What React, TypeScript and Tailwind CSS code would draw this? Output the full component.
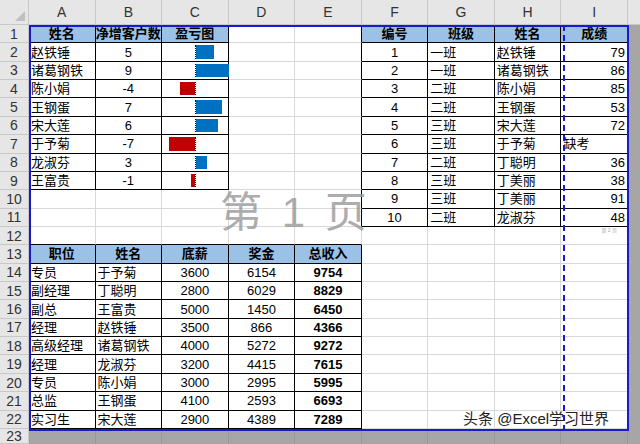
import React from 'react';

const COLS = ['A', 'B', 'C', 'D', 'E', 'F', 'G', 'H', 'I'];
type Cell = { v?: string | number; align?: 'l' | 'c' | 'r'; bold?: boolean; head?: boolean };
const grid: Record<string, Cell> = {};
const put = (r: number, c: number, v: string | number, align: 'l' | 'c' | 'r' = 'c', bold = false, head = false) => {
  grid[`${r}-${c}`] = { v, align, bold, head };
};

// table 1: A1:C9
const t1 = [['赵铁锤', 5], ['诸葛钢铁', 9], ['陈小娟', -4], ['王钢蛋', 7], ['宋大莲', 6], ['于予菊', -7], ['龙淑芬', 3], ['王富贵', -1]] as const;
['姓名', '净增客户数', '盈亏图'].forEach((h, i) => put(1, i, h, 'c', true, true));
t1.forEach(([n, v], i) => { put(i + 2, 0, n, 'l'); put(i + 2, 1, v); put(i + 2, 2, ''); });

// table 2: F1:I11
const t2 = [
  [1, '一班', '赵铁锤', 79], [2, '一班', '诸葛钢铁', 86], [3, '二班', '陈小娟', 85], [4, '二班', '王钢蛋', 53],
  [5, '三班', '宋大莲', 72], [6, '三班', '于予菊', '缺考'], [7, '二班', '丁聪明', 36], [8, '三班', '丁美丽', 38],
  [9, '三班', '丁美丽', 91], [10, '二班', '龙淑芬', 48],
] as const;
['编号', '班级', '姓名', '成绩'].forEach((h, i) => put(1, i + 5, h, 'c', true, true));
t2.forEach(([a, b, c, d], i) => {
  put(i + 2, 5, a); put(i + 2, 6, b, 'l'); put(i + 2, 7, c, 'l'); put(i + 2, 8, d, typeof d === 'number' ? 'r' : 'l');
});

// table 3: A13:E22
const t3 = [
  ['专员', '于予菊', 3600, 6154], ['副经理', '丁聪明', 2800, 6029], ['副总', '王富贵', 5000, 1450], ['经理', '赵铁锤', 3500, 866],
  ['高级经理', '诸葛钢铁', 4000, 5272], ['经理', '龙淑芬', 3200, 4415], ['专员', '陈小娟', 3000, 2995], ['总监', '王钢蛋', 4100, 2593],
  ['实习生', '宋大莲', 2900, 4389],
] as const;
['职位', '姓名', '底薪', '奖金', '总收入'].forEach((h, i) => put(13, i, h, 'c', true, true));
t3.forEach(([a, b, c, d], i) => {
  put(i + 14, 0, a, 'l'); put(i + 14, 1, b, 'l'); put(i + 14, 2, c); put(i + 14, 3, d); put(i + 14, 4, c + d, 'c', true);
});

const inTable = (r: number, c: number) => !!grid[`${r}-${c}`];
const bars: Record<number, number> = Object.fromEntries(t1.map(([, v], i) => [i + 2, v]));

function DataBar({ v }: { v: number }) {
  const w = Math.abs(v) * 3.67;
  return (
    <div className="absolute inset-0">
      <div className="absolute top-[2px] bottom-[2px] left-[33px] border-l border-dotted border-black" />
      <div
        className={v > 0 ? 'absolute top-[2px] bottom-[2px] bg-[#0070c0]' : 'absolute top-[2px] bottom-[2px] bg-[#c00000]'}
        style={v > 0 ? { left: 34, width: w } : { left: 33 - w, width: w }}
      />
    </div>
  );
}

export default function App() {
  const rows = Array.from({ length: 23 }, (_, i) => i + 1);
  return (
    <div className="w-[640px] h-[444px] overflow-hidden bg-[#a6a6a6] relative text-[13px] text-black" style={{ fontFamily: '"Liberation Sans", "Noto Sans CJK SC", sans-serif' }}>
      <div className="grid grid-cols-[29px_repeat(9,66.55px)_1fr] grid-rows-[25px_repeat(22,18.36px)_1fr] h-full">
        {/* column headers */}
        <div className="bg-[#e6e6e6] border-r border-b border-[#c8c8c8] relative">
          <div className="absolute right-[3px] bottom-[3px] w-0 h-0 border-l-[10px] border-l-transparent border-b-[10px] border-b-[#c0c0c0]" />
        </div>
        {COLS.map((c) => (
          <div key={c} className="bg-[#e6e6e6] border-r border-b border-[#c8c8c8] flex items-center justify-center text-[14px] text-[#333]">{c}</div>
        ))}
        <div className="bg-[#e6e6e6] border-b border-[#c8c8c8]" />
        {rows.map((r) => (
          <React.Fragment key={r}>
            <div className="bg-[#e6e6e6] border-r border-b border-[#c8c8c8] flex items-center justify-center text-[14px] text-[#333] leading-none">{r}</div>
            {COLS.map((_, c) => {
              if (r === 23) return <div key={c} className="bg-[#a6a6a6] border-r border-[#999]" />;
              const cell = grid[`${r}-${c}`];
              const rb = inTable(r, c) || inTable(r, c + 1) ? 'border-r-black' : 'border-r-[#d9d9d9]';
              const bb = inTable(r, c) || inTable(r + 1, c) ? 'border-b-black' : 'border-b-[#d9d9d9]';
              const bg = cell?.head ? 'bg-[#9bc2e6]' : 'bg-white';
              const al = cell?.align === 'l' ? 'justify-start pl-[2px]' : cell?.align === 'r' ? 'justify-end pr-[2px]' : 'justify-center';
              return (
                <div key={c} className={`relative flex items-center leading-none border-r border-b ${rb} ${bb} ${bg} ${al} ${cell?.bold ? 'font-bold' : ''}`}>
                  {c === 2 && bars[r] !== undefined && <DataBar v={bars[r]} />}
                  {!(c === 2 && r > 1 && r < 10) && cell?.v}
                  {r === 12 && c === 8 && <span className="absolute top-[1px] left-[40px] text-[5px] text-[#aaa]">第 2 页</span>}
                </div>
              );
            })}
            <div className="bg-[#a6a6a6]" />
          </React.Fragment>
        ))}
      </div>
      {/* page frame and break */}
      <div className="absolute left-[29px] top-[25px] w-[600px] h-[406px] border-2 border-[#1a1acc] pointer-events-none" />
      <div className="absolute left-[563px] top-[25px] h-[406px] border-l-2 border-dashed border-[#1a1acc] pointer-events-none" />
      <div className="absolute left-[220px] top-[192px] text-[42px] text-[#999] leading-none tracking-[4px] opacity-80 pointer-events-none">第 1 页</div>
      <div className="absolute left-[463px] top-[408px] text-[15px] text-[#222] pointer-events-none">头条 @Excel学习世界</div>
    </div>
  );
}
